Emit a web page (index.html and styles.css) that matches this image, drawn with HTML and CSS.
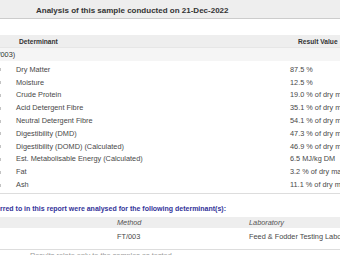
FILE: index.html
```html
<!DOCTYPE html>
<html lang="en">
<head>
<meta charset="utf-8">
<title>Analysis report</title>
<link rel="stylesheet" href="styles.css">
</head>
<body>
<div class="page">
  <div class="title">Analysis of this sample conducted on 21-Dec-2022</div>

  <div class="results">
    <div class="thead">
      <span class="h-det">Determinant</span>
      <span class="h-val">Result Value</span>
    </div>
    <div class="group"><span class="group-label">(FT/003)</span></div>
    <div class="rows">
      <div class="row"><span class="mark"></span><span class="det">Dry Matter</span><span class="val">87.5 %</span></div>
      <div class="row"><span class="mark"></span><span class="det">Moisture</span><span class="val">12.5 %</span></div>
      <div class="row"><span class="mark"></span><span class="det">Crude Protein</span><span class="val">19.0 % of dry matter</span></div>
      <div class="row"><span class="mark"></span><span class="det">Acid Detergent Fibre</span><span class="val">35.1 % of dry matter</span></div>
      <div class="row"><span class="mark"></span><span class="det">Neutral Detergent Fibre</span><span class="val">54.1 % of dry matter</span></div>
      <div class="row"><span class="mark"></span><span class="det">Digestibility (DMD)</span><span class="val">47.3 % of dry matter</span></div>
      <div class="row"><span class="mark"></span><span class="det">Digestibility (DOMD) (Calculated)</span><span class="val">46.9 % of dry matter</span></div>
      <div class="row"><span class="mark"></span><span class="det">Est. Metabolisable Energy (Calculated)</span><span class="val">6.5 MJ/kg DM</span></div>
      <div class="row"><span class="mark"></span><span class="det">Fat</span><span class="val">3.2 % of dry matter</span></div>
      <div class="row"><span class="mark"></span><span class="det">Ash</span><span class="val">11.1 % of dry matter</span></div>
    </div>
  </div>

  <p class="note">Samples referred to in this report were analysed for the following determinant(s):</p>

  <div class="methods">
    <div class="mhead">
      <span class="m-method">Method</span>
      <span class="m-lab">Laboratory</span>
    </div>
    <div class="mrow">
      <span class="m-method">FT/003</span>
      <span class="m-lab">Feed &amp; Fodder Testing Laboratory</span>
    </div>
  </div>

  <p class="foot">Results relate only to the samples as tested.</p>
</div>
</body>
</html>
```

FILE: styles.css
```css
* {
  box-sizing: border-box;
  margin: 0;
  padding: 0;
}

html,
body {
  width: 340px;
  height: 255px;
  overflow: hidden;
  background: #ffffff;
}

body {
  font-family: "Liberation Sans", Arial, sans-serif;
  font-size: 7.33px;
  color: #484848;
}

.page {
  width: 340px;
  white-space: nowrap;
}

.title {
  height: 19px;
  line-height: 17px;
  padding-top: 2px;
  padding-left: 36px;
  background: #eeeeee;
  border-bottom: 1px solid #cccccc;
  font-size: 8px;
  font-weight: bold;
  color: #333333;
}

.results {
  margin-top: 16px;
  padding-bottom: 2px;
  border-bottom: 1px solid #dddddd;
}

.thead {
  display: flex;
  align-items: center;
  height: 12px;
  background: #eeeeee;
  font-size: 6.67px;
  font-weight: bold;
  color: #333333;
}

.thead > span,
.row > span,
.mhead > span,
.mrow > span {
  flex: none;
}

.h-det {
  width: 298px;
  padding-left: 19px;
}

.group {
  display: flex;
  align-items: center;
  height: 14px;
  background: #f5f5f5;
  border-top: 1px solid #e6e6e6;
  color: #333333;
  overflow: hidden;
}

.group-label {
  flex: none;
  margin-left: -12.9px;
}

.rows {
  padding-top: 2px;
}

.row {
  display: flex;
  align-items: center;
  height: 12.8px;
}

.mark {
  width: 16px;
  display: flex;
  align-items: center;
}

.mark::before {
  content: "";
  display: block;
  width: 1px;
  height: 3px;
  margin-top: 1px;
  background: #c4c4c4;
}

.det {
  width: 274px;
}

.note {
  margin-top: 9px;
  height: 12px;
  line-height: 12px;
  font-size: 7px;
  font-weight: bold;
  color: #333399;
  text-indent: -43.6px;
  overflow: hidden;
}

.methods {
  margin-top: 2px;
  border-bottom: 1px solid #dddddd;
}

.mhead {
  display: flex;
  align-items: center;
  height: 11px;
  background: #eeeeee;
  font-style: italic;
  color: #555555;
}

.mrow {
  display: flex;
  align-items: flex-start;
  height: 21px;
  padding-top: 3px;
  line-height: 12px;
}

.m-method {
  width: 249px;
  padding-left: 117px;
}

.foot {
  margin-top: 1px;
  padding-left: 30px;
  line-height: 10px;
  color: #999999;
}
```
